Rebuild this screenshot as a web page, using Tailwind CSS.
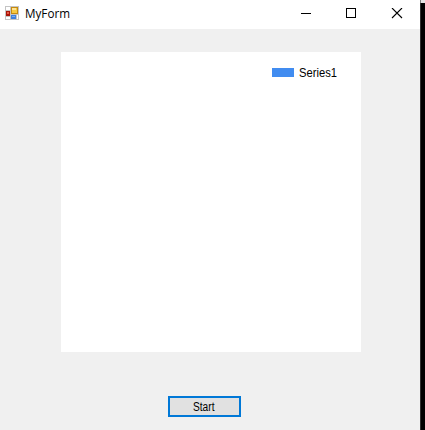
<!DOCTYPE html>
<html lang="en">
<head>
<meta charset="utf-8">
<title>MyForm</title>
<script src="https://cdn.jsdelivr.net/npm/@tailwindcss/browser@4"></script>
</head>
<body class="flex h-[430px] w-[425px] overflow-hidden bg-[#f0f0f0] font-['Open_Sans','Noto_Sans',sans-serif] text-black">
<main class="flex w-[420px] flex-col">
  <header class="flex h-[29px] items-start bg-white">
    <svg class="ml-[5px] mt-[6px] h-[14px] w-[14px] shrink-0" viewBox="0 0 14 14" shape-rendering="crispEdges">
      <path fill="#c4c4c4" d="M0 0h14v14H0z"/>
      <path fill="#fff" d="M1 1h4v3H1zM1 11h4v2H1zM12 9h1v4h-1z"/>
      <path fill="#a91408" d="M1 5h4v5H1z"/>
      <path fill="#e65a45" d="M2 6h2v2H2z"/>
      <path fill="#c58a10" d="M6 1h7v7H6z"/>
      <path fill="#f7c940" d="M7 2h5v5H7z"/>
      <path fill="#ffe494" d="M7 2h4v2H7z"/>
      <path fill="#3f7fdc" d="M6 9h5v4H6z"/>
      <path fill="#75aaf3" d="M7 10h3v1H7z"/>
    </svg>
    <h1 class="ml-[6px] mt-[5px] flex-1 text-[12px] leading-[17px]"><svg class="block h-[17px] w-[50px] overflow-visible"><text x="0" y="13" textLength="45" lengthAdjust="spacingAndGlyphs">MyForm</text></svg></h1>
    <svg class="mt-[8px] mr-[17px] h-[11px] w-[103px] shrink-0" viewBox="0 0 103 11">
      <path d="M1 5h10v1H1z" shape-rendering="crispEdges"/>
      <path d="M46.5.5h9v9h-9z" fill="none" stroke="#000" shape-rendering="crispEdges"/>
      <path d="M92 0l10 10M102 0L92 10" fill="none" stroke="#000" stroke-width="1.1"/>
    </svg>
  </header>
  <section class="mt-[23px] ml-[61px] flex h-[300px] w-[300px] items-start bg-white">
    <div class="mt-[12px] ml-[211px] flex items-center gap-[5px]">
      <span class="h-[9px] w-[22px] bg-[#418cf0]"></span>
      <span class="font-['Liberation_Sans',sans-serif] text-[12.5px] leading-[17px]"><svg class="block h-[17px] w-[42px] overflow-visible"><text x="0" y="13" textLength="38" lengthAdjust="spacingAndGlyphs">Series1</text></svg></span>
    </div>
  </section>
  <button class="mt-[44px] ml-[168px] flex h-[21px] w-[73px] items-center justify-center border-2 border-[#0078d7] bg-[#e1e1e1] pr-[1px] text-[12px] leading-[15px]"><svg class="block h-[15px] w-[22px] overflow-visible"><text x="0" y="12" textLength="21.5" lengthAdjust="spacingAndGlyphs" class="font-['Liberation_Sans',sans-serif]">Start</text></svg></button>
</main>
<aside class="flex w-[5px] flex-col">
  <div class="h-[3px] border-l border-[#808080] bg-[#e4e4e4]"></div>
  <div class="flex-1 border-l border-[#303030] bg-black"></div>
</aside>
</body>
</html>
